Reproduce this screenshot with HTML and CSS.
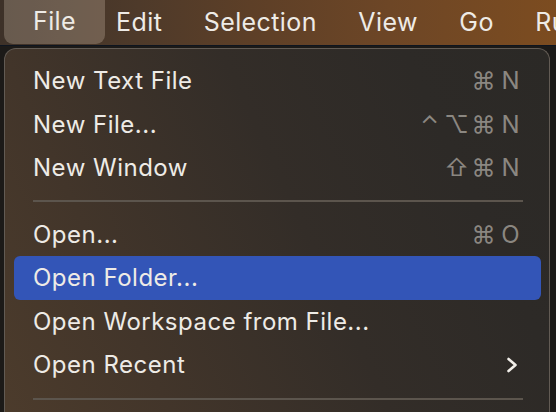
FILE: index.html
```html
<!DOCTYPE html>
<html>
<head>
<meta charset="utf-8">
<link rel="stylesheet" href="styles.css">
</head>
<body>
<div class="menubar">
  <span class="mb-item mb-active">File</span>
  <span class="mb-item mb-edit">Edit</span>
  <span class="mb-item">Selection</span>
  <span class="mb-item">View</span>
  <span class="mb-item">Go</span>
  <span class="mb-item">Run</span>
</div>
<div class="menu">
  <div class="row"><span class="label">New Text File</span><span class="keys"><span class="k">⌘</span><span class="k">N</span></span></div>
  <div class="row"><span class="label">New File...</span><span class="keys"><span class="k">⌃</span><span class="k">⌥</span><span class="k">⌘</span><span class="k">N</span></span></div>
  <div class="row"><span class="label">New Window</span><span class="keys"><span class="k">⇧</span><span class="k">⌘</span><span class="k">N</span></span></div>
  <div class="sep"></div>
  <div class="row"><span class="label">Open...</span><span class="keys"><span class="k">⌘</span><span class="k">O</span></span></div>
  <div class="row row-active"><span class="label">Open Folder...</span></div>
  <div class="row"><span class="label">Open Workspace from File...</span></div>
  <div class="row"><span class="label">Open Recent</span><span class="keys"><span class="k"><svg class="chev" width="12" height="16" viewBox="0 0 12 16"><polyline points="2.5,2 9.5,8 2.5,14" fill="none" stroke="#f2efea" stroke-width="2.6" stroke-linecap="round" stroke-linejoin="round"/></svg></span></span></div>
  <div class="sep sep2"></div>
</div>
</body>
</html>
```

FILE: styles.css
```css
html, body {
  margin: 0;
  padding: 0;
}
body {
  width: 556px;
  height: 412px;
  overflow: hidden;
  background: #1c1a18;
  font-family: "Inter", "Liberation Sans", sans-serif;
  color: #eeebe6;
}
.menubar {
  height: 45px;
  border-bottom: 1px solid #0e1520;
  background: linear-gradient(90deg, #3d3128 0%, #4e3a2a 25%, #5d3f27 45%, #6d4626 70%, #7c4c20 100%);
  display: flex;
  align-items: center;
  padding-left: 4px;
  white-space: nowrap;
  font-size: 25px;
  letter-spacing: 0.4px;
  overflow: hidden;
}
.mb-item {
  margin-right: 41.5px;
  line-height: 43px;
}
.mb-active {
  background: rgba(255, 235, 215, 0.22);
  border-radius: 0 0 9px 9px;
  padding: 0 29px 0 29px;
  margin-right: 11px;
  height: 44px;
  line-height: 42px;
  align-self: flex-start;
}
.menu {
  margin: 2px 0 0 4px;
  width: 546px;
  height: 400px;
  box-sizing: border-box;
  border: 1px solid #625b54;
  border-bottom: none;
  border-radius: 12px 12px 0 0;
  padding: 10px 8px 0 9px;
  background: linear-gradient(65deg, #4d3c2c 0%, #42352a 25%, #332d28 55%, #2d2a27 80%, #2b2926 100%);
  font-size: 24px;
  letter-spacing: 0.5px;
}
.row {
  height: 43.5px;
  display: flex;
  align-items: center;
  justify-content: space-between;
  padding: 0 17px 0 19px;
  border-radius: 6px;
}
.row-active {
  background: #3355b7;
}
.keys {
  display: flex;
  color: #8b8781;
  font-size: 24px;
  letter-spacing: 0;
}
.k {
  width: 27px;
  text-align: center;
  display: inline-flex;
  justify-content: center;
  align-items: center;
}
.chev {
  display: block;
  margin-left: 3px;
}
.sep {
  height: 2px;
  margin: 10px 18px 11px 19px;
  background: #5c554d;
}
.sep2 {
  margin-top: 11px;
}
```
